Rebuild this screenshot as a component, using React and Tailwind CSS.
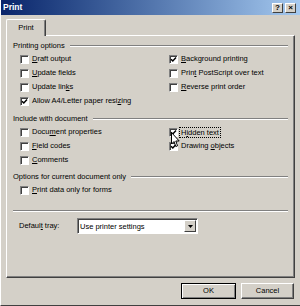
import React from 'react';

const ink = "font-['Liberation_Sans',Arial,sans-serif]";

function Check({ on }) {
  return (
    <span className="w-[9px] h-[9px] shrink-0 bg-white border border-t-[#808080] border-l-[#808080] border-b-white border-r-white shadow-[inset_1px_1px_0_#404040] flex items-center justify-center">
      {on && (
        <svg width="7" height="7" viewBox="0 0 7 7">
          <path d="M1 3.2 L2.8 5 L6 1.6" fill="none" stroke="#000" strokeWidth="1.5" />
        </svg>
      )}
    </span>
  );
}

// label with one access-key letter underlined
function Label({ text, k }) {
  const i = text.indexOf(k);
  if (i < 0) return <span>{text}</span>;
  return (
    <span>
      {text.slice(0, i)}
      <span className="underline underline-offset-[1px]">{text[i]}</span>
      {text.slice(i + 1)}
    </span>
  );
}

function Row({ text, k, on, focus }) {
  return (
    <div className="h-[14px] pl-[7px] flex items-center gap-[3px] whitespace-nowrap">
      <Check on={on} />
      <span className={focus ? 'border border-dotted border-black px-[1px] leading-[9px] -ml-[2px]' : ''}>
        <Label text={text} k={k} />
      </span>
    </div>
  );
}

function Group({ title, className = 'h-[13px]' }) {
  return (
    <div className={`${className} flex items-center whitespace-nowrap`}>
      <span>{title}</span>
      <span className="flex-1 ml-[5px] border-t border-t-[#808080] border-b border-b-white" />
    </div>
  );
}

function TitleButton({ children }) {
  return (
    <span className="w-[11px] h-[10px] bg-[#d4d0c8] border border-t-white border-l-white border-r-[#404040] border-b-[#404040] flex items-center justify-center text-[8px] font-bold text-black leading-none">
      {children}
    </span>
  );
}

export default function App() {
  return (
    <div className={`${ink} w-[300px] h-[306px] bg-[#d4d0c8] text-[7.5px] text-black flex flex-col border-b border-b-[#404040] border-l border-l-white relative overflow-hidden`}>
      {/* title bar */}
      <div className="h-[15px] bg-gradient-to-r from-[#0a246a] to-[#a6caf0] flex items-center justify-between pl-[2px] pr-[4px]">
        <span className="text-white font-bold text-[8.5px]">Print</span>
        <div className="flex gap-[2px]">
          <TitleButton>?</TitleButton>
          <TitleButton>×</TitleButton>
        </div>
      </div>

      {/* tab */}
      <div className="mt-[4px] ml-[5px] flex">
        <div className="w-[40px] h-[17px] -mb-px relative z-10 bg-[#d4d0c8] border-t border-l border-white border-r border-r-[#404040] shadow-[inset_-1px_0_0_#808080] rounded-t-[2px] flex items-center justify-center pb-[1px]">
          Print
        </div>
      </div>

      {/* tab panel */}
      <div className="ml-[5px] w-[289px] h-[243px] border border-t-white border-l-white border-r-[#404040] border-b-[#404040] shadow-[inset_-1px_-1px_0_#808080] pt-[3px] pl-[6px] pr-[6px] flex flex-col">
        <Group title="Printing options" />
        <div className="grid grid-cols-[149px_1fr]">
          <div>
            <Row text="Draft output" k="D" />
            <Row text="Update fields" k="U" />
            <Row text="Update links" k="k" />
            <Row text="Allow A4/Letter paper resizing" k="z" on />
          </div>
          <div>
            <Row text="Background printing" k="B" on />
            <Row text="Print PostScript over text" k="t" />
            <Row text="Reverse print order" k="R" />
          </div>
        </div>

        <div className="mt-[4px]">
          <Group title="Include with document" />
        </div>
        <div className="grid grid-cols-[149px_1fr]">
          <div>
            <Row text="Document properties" k="m" />
            <Row text="Field codes" k="F" />
            <Row text="Comments" k="C" />
          </div>
          <div className="relative">
            <Row text="Hidden text" k="i" on focus />
            <Row text="Drawing objects" k="o" on />
            {/* mouse pointer over the checkbox */}
            <svg className="absolute left-[9px] top-[7px]" width="9" height="16" viewBox="0 0 9 16">
              <path d="M0.5 0.5 L0.5 12 L3 9.5 L4.8 14.5 L6.6 13.8 L4.8 9 L8.2 9 Z" fill="#fff" stroke="#000" strokeWidth="1" strokeLinejoin="round" />
            </svg>
          </div>
        </div>

        <div className="mt-[4px]">
          <Group title="Options for current document only" className="h-[12px]" />
        </div>
        <Row text="Print data only for forms" k="P" />

        <div className="mt-[13px] border-t border-t-[#808080] border-b border-b-white" />

        <div className="mt-[6px] pl-[6px] flex items-center">
          <span className="w-[58px]">
            <Label text="Default tray:" k="t" />
          </span>
          <div className="w-[121px] h-[16px] bg-white border border-t-[#808080] border-l-[#808080] border-r-white border-b-white shadow-[inset_1px_1px_0_#404040] flex items-center justify-between pl-[2px] pr-[1px]">
            <span className="pt-[1px]">Use printer settings</span>
            <span className="w-[12px] h-[12px] bg-[#d4d0c8] border border-t-white border-l-white border-r-[#404040] border-b-[#404040] flex items-center justify-center">
              <svg width="5" height="3" viewBox="0 0 5 3">
                <path d="M0 0 H5 L2.5 3 Z" fill="#000" />
              </svg>
            </span>
          </div>
        </div>
      </div>

      {/* buttons */}
      <div className="mt-[5px] pr-[6px] flex justify-end gap-[5px]">
        <button className="w-[55px] h-[16px] bg-[#d4d0c8] border border-black shadow-[inset_1px_1px_0_#fff,inset_-1px_-1px_0_#808080] flex items-center justify-center">
          OK
        </button>
        <button className="w-[53px] h-[16px] bg-[#d4d0c8] border border-t-white border-l-white border-r-[#404040] border-b-[#404040] shadow-[inset_-1px_-1px_0_#808080] flex items-center justify-center">
          Cancel
        </button>
      </div>
    </div>
  );
}
